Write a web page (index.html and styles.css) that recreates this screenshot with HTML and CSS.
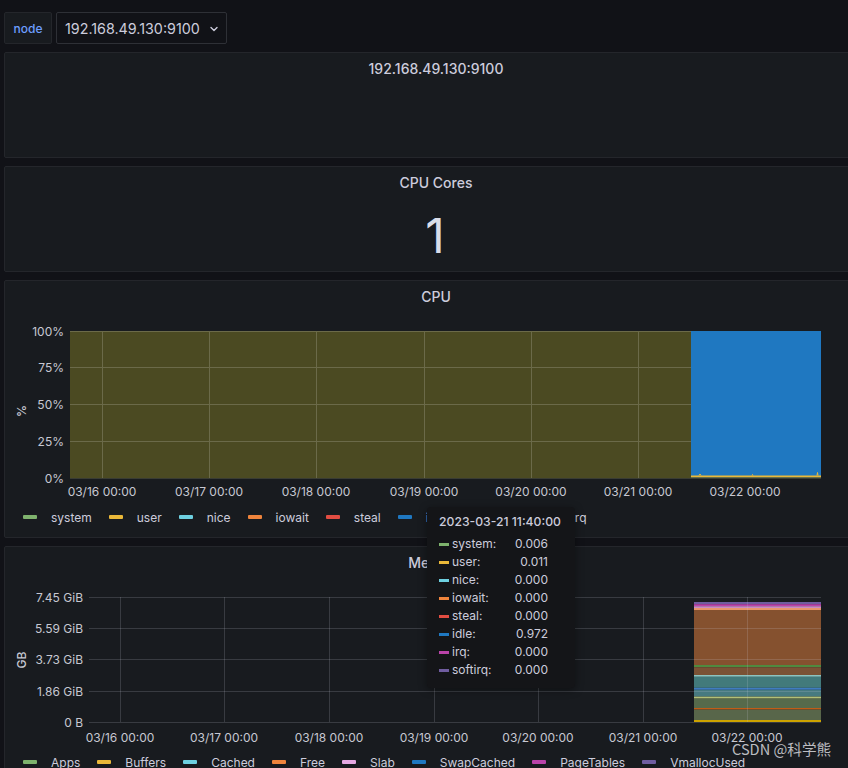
FILE: index.html
```html
<!DOCTYPE html>
<html lang="en">
<head>
<meta charset="utf-8">
<title>Node dashboard</title>
<link rel="stylesheet" href="styles.css">
</head>
<body>
<div class="page">
  <div class="toolbar">
    <div class="var-label">node</div>
    <div class="var-select">
      <span>192.168.49.130:9100</span>
      <svg class="chev" width="8" height="6" viewBox="0 0 8 6"><path d="M1 1.5 L4 4.5 L7 1.5" fill="none" stroke="#ccccdc" stroke-width="1.4" stroke-linecap="round" stroke-linejoin="round"/></svg>
    </div>
  </div>

  <section class="panel panel-text">
    <header class="panel-title">192.168.49.130:9100</header>
  </section>

  <section class="panel panel-stat">
    <header class="panel-title">CPU Cores</header>
    <div class="stat-value">1</div>
  </section>

  <section class="panel panel-cpu">
    <header class="panel-title">CPU</header>
    <svg class="chart chart-cpu" width="862" height="194" viewBox="5 313 862 194">
      <g class="axis-text" text-anchor="end">
        <text x="64" y="331">100%</text>
        <text x="64" y="367.5">75%</text>
        <text x="64" y="404.5">50%</text>
        <text x="64" y="441">25%</text>
        <text x="64" y="478">0%</text>
      </g>
      <text class="axis-title" x="21" y="411" transform="rotate(-90 21 411)" text-anchor="middle">%</text>
      <rect x="70" y="331" width="621" height="147" fill="#4b4a22"/>
      <g class="grid-olive">
        <line x1="70" y1="331.5" x2="821" y2="331.5"/>
        <line x1="70" y1="367.5" x2="821" y2="367.5"/>
        <line x1="70" y1="404.5" x2="821" y2="404.5"/>
        <line x1="70" y1="441.5" x2="821" y2="441.5"/>
        <line x1="102.5" y1="331" x2="102.5" y2="478"/>
        <line x1="209.5" y1="331" x2="209.5" y2="478"/>
        <line x1="316.5" y1="331" x2="316.5" y2="478"/>
        <line x1="424.5" y1="331" x2="424.5" y2="478"/>
        <line x1="531.5" y1="331" x2="531.5" y2="478"/>
        <line x1="638.5" y1="331" x2="638.5" y2="478"/>
      </g>
      <rect x="691" y="331" width="130" height="147" fill="#1f78c1"/>
      <rect x="691" y="475.5" width="130" height="1.8" fill="#eab839"/>
      <path d="M699 475.5 l1 -1.5 l1 1.5 M752 475.5 l0.5 -1 l0.5 1 M817 475.5 l0.5 -3 l0.5 3" stroke="#eab839" stroke-width="1" fill="none"/>
      <rect x="691" y="477.2" width="130" height="1" fill="#6a6a3a"/>
      <line x1="70" y1="478.5" x2="821" y2="478.5" stroke="#3a3c33" stroke-width="1"/>
      <g class="axis-text" text-anchor="middle">
        <text x="102" y="491">03/16 00:00</text>
        <text x="209" y="491">03/17 00:00</text>
        <text x="316" y="491">03/18 00:00</text>
        <text x="424" y="491">03/19 00:00</text>
        <text x="531" y="491">03/20 00:00</text>
        <text x="638" y="491">03/21 00:00</text>
        <text x="745" y="491">03/22 00:00</text>
      </g>
    </svg>
    <ul class="legend">
      <li><i class="s-green"></i>system</li>
      <li><i class="s-yellow"></i>user</li>
      <li><i class="s-cyan"></i>nice</li>
      <li><i class="s-orange"></i>iowait</li>
      <li><i class="s-red"></i>steal</li>
      <li><i class="s-blue"></i>idle</li>
      <li><i class="s-magenta"></i>irq</li>
      <li><i class="s-purple"></i>softirq</li>
    </ul>
  </section>

  <section class="panel panel-mem">
    <header class="panel-title">Memory</header>
    <svg class="chart chart-mem" width="862" height="173" viewBox="5 579 862 173">
      <g class="axis-text" text-anchor="end">
        <text x="83" y="597">7.45 GiB</text>
        <text x="83" y="628">5.59 GiB</text>
        <text x="83" y="659.5">3.73 GiB</text>
        <text x="83" y="691">1.86 GiB</text>
        <text x="83" y="722.5">0 B</text>
      </g>
      <text class="axis-title" x="21" y="660" transform="rotate(-90 21 660)" text-anchor="middle">GB</text>
      <g>
        <rect x="694" y="602" width="127" height="2.2" fill="#705da0"/>
        <rect x="694" y="604.2" width="127" height="2" fill="#ba43a9"/>
        <rect x="694" y="606.2" width="127" height="1.8" fill="#c98ac4"/>
        <rect x="694" y="608" width="127" height="2" fill="#e8946a"/>
        <rect x="694" y="610" width="127" height="56" fill="#85512f"/>
        <rect x="694" y="665" width="127" height="2.2" fill="#4f8a3f"/>
        <rect x="694" y="667.2" width="127" height="7.8" fill="#7a5235"/>
        <rect x="694" y="675" width="127" height="1.8" fill="#8cc4c0"/>
        <rect x="694" y="676.8" width="127" height="11" fill="#427a7b"/>
        <rect x="694" y="687.8" width="127" height="2" fill="#3f7cc0"/>
        <rect x="694" y="689.8" width="127" height="6.8" fill="#477a80"/>
        <rect x="694" y="696.6" width="127" height="2" fill="#b3c077"/>
        <rect x="694" y="698.6" width="127" height="9.4" fill="#566a4b"/>
        <rect x="694" y="708" width="127" height="1.6" fill="#c15c17"/>
        <rect x="694" y="709.6" width="127" height="10.4" fill="#58664a"/>
        <rect x="694" y="720" width="127" height="2" fill="#cca300"/>
      </g>
      <g class="grid">
        <line x1="89" y1="597.5" x2="821" y2="597.5"/>
        <line x1="89" y1="628.5" x2="821" y2="628.5"/>
        <line x1="89" y1="659.5" x2="821" y2="659.5"/>
        <line x1="89" y1="691.5" x2="821" y2="691.5"/>
        <line x1="89" y1="722.5" x2="821" y2="722.5"/>
        <line x1="120.5" y1="597" x2="120.5" y2="722"/>
        <line x1="224.5" y1="597" x2="224.5" y2="722"/>
        <line x1="329.5" y1="597" x2="329.5" y2="722"/>
        <line x1="434.5" y1="597" x2="434.5" y2="722"/>
        <line x1="538.5" y1="597" x2="538.5" y2="722"/>
        <line x1="643.5" y1="597" x2="643.5" y2="722"/>
        <line x1="747.5" y1="597" x2="747.5" y2="722"/>
      </g>
      <g class="axis-text" text-anchor="middle">
        <text x="120" y="737">03/16 00:00</text>
        <text x="224" y="737">03/17 00:00</text>
        <text x="329" y="737">03/18 00:00</text>
        <text x="434" y="737">03/19 00:00</text>
        <text x="538" y="737">03/20 00:00</text>
        <text x="643" y="737">03/21 00:00</text>
        <text x="747" y="737">03/22 00:00</text>
      </g>
    </svg>
    <ul class="legend">
      <li><i class="s-green"></i>Apps</li>
      <li><i class="s-yellow"></i>Buffers</li>
      <li><i class="s-cyan"></i>Cached</li>
      <li><i class="s-orange"></i>Free</li>
      <li><i class="s-pink"></i>Slab</li>
      <li><i class="s-blue"></i>SwapCached</li>
      <li><i class="s-magenta"></i>PageTables</li>
      <li><i class="s-purple"></i>VmallocUsed</li>
    </ul>
  </section>
</div>

<div class="tooltip">
  <div class="tt-time">2023-03-21 11:40:00</div>
  <div class="tt-rows">
    <i class="s-green"></i><span>system:</span><b>0.006</b>
    <i class="s-yellow"></i><span>user:</span><b>0.011</b>
    <i class="s-cyan"></i><span>nice:</span><b>0.000</b>
    <i class="s-orange"></i><span>iowait:</span><b>0.000</b>
    <i class="s-red"></i><span>steal:</span><b>0.000</b>
    <i class="s-blue"></i><span>idle:</span><b>0.972</b>
    <i class="s-magenta"></i><span>irq:</span><b>0.000</b>
    <i class="s-purple"></i><span>softirq:</span><b>0.000</b>
  </div>
</div>

<div class="watermark">CSDN @科学熊</div>
</body>
</html>
```

FILE: styles.css
```css
* { box-sizing: border-box; margin: 0; padding: 0; }

html, body {
  background: #111217;
  overflow: hidden;
}

body {
  width: 848px;
  height: 768px;
  position: relative;
  font-family: Inter, "Noto Sans", sans-serif;
  color: #ccccdc;
}

.page {
  width: 868px;
  padding: 12px 0 0 4px;
  display: flex;
  flex-direction: column;
  gap: 8px;
}

/* toolbar */
.toolbar {
  display: flex;
  gap: 4px;
  height: 32px;
}

.var-label {
  width: 48px;
  display: flex;
  align-items: center;
  justify-content: center;
  background: #181b1f;
  border: 1px solid #24262b;
  border-radius: 2px;
  color: #6e9fff;
  font-size: 12px;
  font-weight: 500;
}

.var-select {
  width: 171px;
  display: flex;
  align-items: center;
  gap: 10px;
  padding: 0 8px;
  background: #111217;
  border: 1px solid #2e3036;
  border-radius: 2px;
  font-size: 14.3px;
  color: #ccccdc;
}

.chev { display: block; margin-top: 1px; }

/* panels */
.panel {
  width: 864px;
  background: #181b1f;
  border: 1px solid #24262b;
  border-radius: 2px;
  display: flex;
  flex-direction: column;
  flex: none;
}

.panel-title {
  height: 31px;
  margin-bottom: 1px;
  flex: none;
  display: flex;
  align-items: center;
  justify-content: center;
  font-size: 14px;
  font-weight: 500;
  color: #ccccdc;
}

.panel-text, .panel-stat { height: 106px; }
.panel-cpu { height: 258px; }
.panel-mem { height: 240px; }

.stat-value {
  flex: 1;
  display: flex;
  align-items: center;
  justify-content: center;
  font-size: 48px;
  font-weight: 400;
  color: #d9dde8;
  padding-right: 2px;
}

/* charts */
.chart { display: block; flex: none; }

.axis-text text {
  font-family: Inter, "Noto Sans", sans-serif;
  font-size: 12px;
  fill: #c7c8d2;
  dominant-baseline: central;
}

.axis-title {
  font-family: Inter, "Noto Sans", sans-serif;
  font-size: 12px;
  font-weight: 500;
  fill: #c7c8d2;
  dominant-baseline: central;
}

.grid-olive line {
  stroke: #6b6a49;
  stroke-width: 1;
}

.grid line {
  stroke: rgba(204, 204, 220, 0.18);
  stroke-width: 1;
}

/* legend */
.legend {
  list-style: none;
  display: flex;
  align-items: center;
  gap: 17px;
  height: 20px;
  padding-left: 18px;
  font-size: 12px;
  color: #ccccdc;
  flex: none;
}

.legend li {
  display: flex;
  align-items: center;
  gap: 14px;
}

.legend i {
  display: block;
  width: 14px;
  height: 4px;
  border-radius: 1px;
}

/* series colours */
.s-green { background: #7eb26d; }
.s-yellow { background: #eab839; }
.s-cyan { background: #6ed0e0; }
.s-orange { background: #ef843c; }
.s-red { background: #e24d42; }
.s-blue { background: #1f78c1; }
.s-magenta { background: #ba43a9; }
.s-purple { background: #705da0; }
.s-pink { background: #e5a8e2; }

/* tooltip */
.tooltip {
  position: absolute;
  left: 427px;
  top: 507px;
  width: 148px;
  height: 181px;
  background: #141518;
  border-radius: 4px;
  padding: 6px 12px 0 12px;
  font-size: 12px;
  color: #ccccdc;
  box-shadow: 0 2px 8px rgba(0,0,0,0.4);
}

.tt-time {
  height: 18px;
  line-height: 18px;
  font-weight: 500;
  font-size: 12.2px;
  margin-bottom: 4px;
}

.tt-rows {
  display: grid;
  grid-template-columns: 10px 1fr auto;
  column-gap: 3px;
  width: 109px;
  grid-auto-rows: 18px;
  align-items: center;
}

.tt-rows i {
  display: block;
  width: 10px;
  height: 3px;
}

.tt-rows span { line-height: 18px; }

.tt-rows b {
  font-weight: 400;
  text-align: right;
  line-height: 18px;
}

/* watermark */
.watermark {
  position: absolute;
  left: 732px;
  top: 739px;
  font-family: "Noto Sans CJK SC", "Noto Sans", sans-serif;
  font-size: 14.6px;
  line-height: 20px;
  color: rgba(235, 235, 240, 0.78);
}
```
